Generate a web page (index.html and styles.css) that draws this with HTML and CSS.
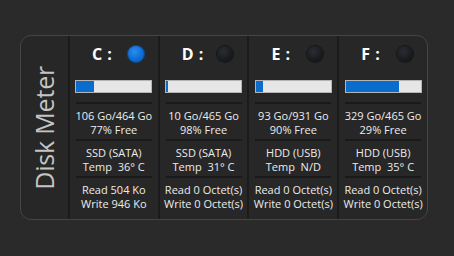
FILE: index.html
```html
<!DOCTYPE html>
<html>
<head>
<meta charset="utf-8">
<link rel="stylesheet" href="styles.css">
</head>
<body>
<div class="panel">
  <div class="label"><span class="label-text">Disk Meter</span></div>

  <div class="drive">
    <div class="head"><span class="letter">C :</span><span class="led on"></span></div>
    <div class="bar"><div class="fill" style="width:23%"></div></div>
    <div class="sep"></div>
    <div class="block"><div>106 Go/464 Go</div><div>77% Free</div></div>
    <div class="sep"></div>
    <div class="block"><div>SSD (SATA)</div><div>Temp&nbsp; 36° C</div></div>
    <div class="sep"></div>
    <div class="block"><div>Read 504 Ko</div><div>Write 946 Ko</div></div>
  </div>

  <div class="drive">
    <div class="head"><span class="letter">D :</span><span class="led"></span></div>
    <div class="bar"><div class="fill" style="width:2%"></div></div>
    <div class="sep"></div>
    <div class="block"><div>10 Go/465 Go</div><div>98% Free</div></div>
    <div class="sep"></div>
    <div class="block"><div>SSD (SATA)</div><div>Temp&nbsp; 31° C</div></div>
    <div class="sep"></div>
    <div class="block"><div>Read 0 Octet(s)</div><div>Write 0 Octet(s)</div></div>
  </div>

  <div class="drive">
    <div class="head"><span class="letter">E :</span><span class="led"></span></div>
    <div class="bar"><div class="fill" style="width:10%"></div></div>
    <div class="sep"></div>
    <div class="block"><div>93 Go/931 Go</div><div>90% Free</div></div>
    <div class="sep"></div>
    <div class="block"><div>HDD (USB)</div><div>Temp&nbsp; N/D</div></div>
    <div class="sep"></div>
    <div class="block"><div>Read 0 Octet(s)</div><div>Write 0 Octet(s)</div></div>
  </div>

  <div class="drive">
    <div class="head"><span class="letter">F :</span><span class="led"></span></div>
    <div class="bar"><div class="fill" style="width:71%"></div></div>
    <div class="sep"></div>
    <div class="block"><div>329 Go/465 Go</div><div>29% Free</div></div>
    <div class="sep"></div>
    <div class="block"><div>HDD (USB)</div><div>Temp&nbsp; 35° C</div></div>
    <div class="sep"></div>
    <div class="block"><div>Read 0 Octet(s)</div><div>Write 0 Octet(s)</div></div>
  </div>
</div>
</body>
</html>
```
FILE: styles.css
```css
html, body {
  margin: 0;
  padding: 0;
  background: #2a2a2a;
  width: 454px;
  height: 256px;
  overflow: hidden;
}
body {
  padding: 35px 0 0 20px;
  box-sizing: border-box;
  font-family: "Open Sans", "Noto Sans", sans-serif;
}
.panel {
  display: flex;
  width: 408px;
  height: 185px;
  box-sizing: border-box;
  border: 1px solid #454545;
  border-radius: 11px;
  background: #272727;
  overflow: hidden;
}
.label {
  width: 47px;
  display: flex;
  align-items: center;
  justify-content: center;
}
.label-text {
  writing-mode: vertical-rl;
  transform: rotate(180deg);
  font-size: 25px;
  color: #c4c4c4;
  line-height: 1;
  white-space: nowrap;
  letter-spacing: -0.2px;
}
.drive {
  width: 90px;
  box-sizing: border-box;
  border-left: 2px solid #1b1b1b;
  display: flex;
  flex-direction: column;
  align-items: center;
}
.head {
  align-self: stretch;
  height: 36px;
  display: flex;
  align-items: center;
  justify-content: space-between;
  padding: 0 14px 0 22px;
}
.letter {
  color: #ffffff;
  font-weight: 700;
  font-size: 16px;
  letter-spacing: 0.5px;
  white-space: pre;
}
.led {
  width: 16px;
  height: 16px;
  border-radius: 50%;
  background: radial-gradient(circle at 40% 35%, #2a2d33 0%, #1a1c20 55%, #0e0f11 100%);
  box-shadow: 0 0 0 1px #161616;
}
.led.on {
  background: radial-gradient(circle at 40% 35%, #2a8cf0 0%, #0d6fd6 55%, #0858b0 100%);
  box-shadow: 0 0 0 1px #0a4f9a;
}
.bar {
  margin-top: 8px;
  width: 77px;
  height: 13px;
  box-sizing: border-box;
  border: 1px solid #b4b4b4;
  background: #e6e6e6;
}
.fill {
  height: 100%;
  background: #0a6ccc;
}
.sep {
  width: 76px;
  height: 2px;
  background: #1a1a1a;
}
.bar + .sep {
  margin-top: 9px;
}
.block {
  padding: 5px 0 2px;
  font-size: 11px;
  line-height: 14px;
  color: #ececec;
  text-align: center;
  white-space: nowrap;
}
```
